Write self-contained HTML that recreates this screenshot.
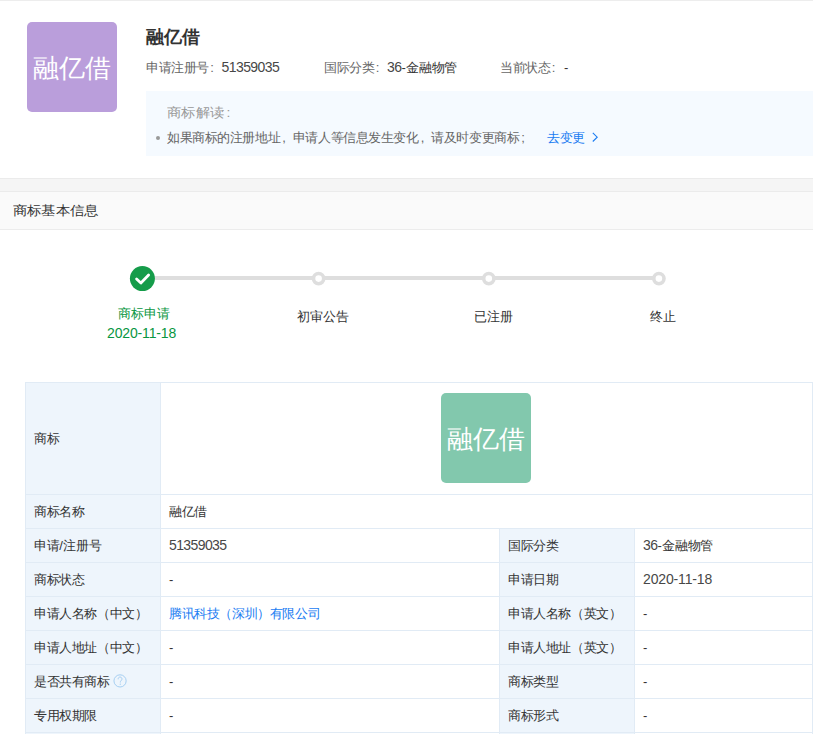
<!DOCTYPE html>
<html><head><meta charset="utf-8">
<style>
*{margin:0;padding:0;box-sizing:border-box}
html,body{width:813px;height:734px;overflow:hidden;background:#fff}
body{position:relative;font-family:"Liberation Sans",sans-serif;font-size:13px;color:#333}
.a{position:absolute;white-space:nowrap;line-height:16px;letter-spacing:-0.4px}
.topline{position:absolute;left:0;top:0;width:813px;height:1px;background:#ededed}
.logo{position:absolute;left:27px;top:22px;width:90px;height:90px;border-radius:5px;background:#ba9edb;color:#fff;font-size:26px;line-height:92px;text-align:center}
.title{font-size:18px;font-weight:bold;color:#333;left:146px;top:26px;line-height:22px;letter-spacing:0}
.lbl{color:#666}
.cm{display:inline-block;width:12.58px;padding-left:2px;letter-spacing:0}
.c{display:inline-block;width:12.6px;padding-left:1.3px}
.n{font-size:14px;letter-spacing:-0.6px;color:#474747}
.d{font-size:14px;letter-spacing:-0.15px}
td .d{color:#474747}
.tip{position:absolute;left:146px;top:91px;width:667px;height:65px;background:#f5faff}
.band{position:absolute;left:0;top:178px;width:813px;height:14px;background:#f5f5f5;border-top:1px solid #ebebeb;border-bottom:1px solid #ebebeb}
.hdr{position:absolute;left:0;top:192px;width:813px;height:38px;background:#fafafa;border-bottom:1px solid #ececec}
.green{color:#089641}
table{position:absolute;left:25px;top:382px;border-collapse:collapse;table-layout:fixed;width:787px}
td{border:1px solid #e1ebf5;height:34px;padding:0 0 0 8px;vertical-align:middle;white-space:nowrap;line-height:16px;letter-spacing:-0.4px}
td.l{background:#eef5fc}
.tm{position:absolute;left:441px;top:393px;width:90px;height:90px;border-radius:5px;background:#82c8ad;color:#fff;font-size:26px;line-height:92px;text-align:center}
.blue{color:#1a7cf2}
.q{display:inline-block;width:13px;height:13px;border:1px solid #a9cdf0;border-radius:50%;color:#a9cdf0;font-size:10px;line-height:11px;text-align:center;vertical-align:-2px;margin-left:4px;letter-spacing:0}
</style></head><body>
<div class="topline"></div>
<div class="logo">融亿借</div>
<div class="a title">融亿借</div>
<div class="a" style="left:146px;top:59px"><span class="lbl">申请注册号<span class="c">:</span></span><span class="n">51359035</span></div>
<div class="a" style="left:324px;top:59px"><span class="lbl">国际分类<span class="c">:</span></span><span class="n">36</span><span style="letter-spacing:0.6px">-</span>金融物管</div>
<div class="a" style="left:500px;top:60px"><span class="lbl">当前状态<span class="c">:</span></span><span style="margin-left:1px">-</span></div>
<div class="tip"></div>
<div class="a" style="left:167px;top:104px;color:#999;font-size:14px;letter-spacing:0.4px;transform:scaleY(0.9);transform-origin:0 10px">商标解读<span class="c" style="width:14px;padding-left:2px">:</span></div>
<div style="position:absolute;left:156px;top:136px;width:4px;height:4px;border-radius:50%;background:#999"></div>
<div class="a" style="left:167px;top:130px;color:#666;letter-spacing:-0.42px">如果商标的注册地址<span class="cm">,</span>申请人等信息发生变化<span class="cm">,</span>请及时变更商标<span class="cm">;</span></div>
<div class="a blue" style="left:547px;top:130px">去变更</div>
<svg style="position:absolute;left:591px;top:132px" width="8" height="11" viewBox="0 0 8 11"><path d="M1.8 0.9 L6.2 5.2 L1.8 9.5" fill="none" stroke="#1a7cf2" stroke-width="1.1"/></svg>

<div class="band"></div>
<div class="hdr"></div>
<div class="a" style="left:13px;top:202px;font-size:14px;line-height:17px;letter-spacing:0.2px;transform:scaleY(0.9);transform-origin:0 10px">商标基本信息</div>

<svg style="position:absolute;left:0;top:250px" width="813" height="60" viewBox="0 250 813 60">
<rect x="142" y="276" width="517" height="4" fill="#dedede"/>
<circle cx="142.4" cy="278.6" r="12.5" fill="#159c4a"/>
<path d="M136.6 279 L140.9 283 L148.6 275" fill="none" stroke="#fff" stroke-width="2.8" stroke-linecap="round" stroke-linejoin="round"/>
<circle cx="318.6" cy="278.6" r="5.1" fill="#fff" stroke="#dedede" stroke-width="3.6"/>
<circle cx="488.8" cy="278.6" r="5.1" fill="#fff" stroke="#dedede" stroke-width="3.6"/>
<circle cx="658.9" cy="278.6" r="5.1" fill="#fff" stroke="#dedede" stroke-width="3.6"/>
</svg>
<div class="a green" style="left:118px;top:306px;letter-spacing:0">商标申请</div>
<div class="a green d" style="left:107px;top:325px">2020-11-18</div>
<div class="a" style="left:297px;top:309px;letter-spacing:0">初审公告</div>
<div class="a" style="left:474px;top:309px;letter-spacing:0">已注册</div>
<div class="a" style="left:650px;top:309px;letter-spacing:0">终止</div>

<table>
<colgroup><col style="width:135px"><col style="width:339px"><col style="width:135px"><col style="width:178px"></colgroup>
<tr><td class="l" style="height:112px">商标</td><td colspan="3"></td></tr>
<tr><td class="l">商标名称</td><td colspan="3">融亿借</td></tr>
<tr><td class="l">申请<span style="letter-spacing:0.5px">/</span>注册号</td><td><span class="n">51359035</span></td><td class="l">国际分类</td><td><span class="n">36</span><span style="letter-spacing:0.6px">-</span>金融物管</td></tr>
<tr><td class="l">商标状态</td><td>-</td><td class="l">申请日期</td><td><span class="d">2020-11-18</span></td></tr>
<tr><td class="l">申请人名称（中文）</td><td class="blue">腾讯科技（深圳）有限公司</td><td class="l">申请人名称（英文）</td><td>-</td></tr>
<tr><td class="l">申请人地址（中文）</td><td>-</td><td class="l">申请人地址（英文）</td><td>-</td></tr>
<tr><td class="l">是否共有商标</td><td>-</td><td class="l">商标类型</td><td>-</td></tr>
<tr><td class="l">专用权期限</td><td>-</td><td class="l">商标形式</td><td>-</td></tr>
<tr><td class="l"></td><td></td><td class="l"></td><td></td></tr>
</table>
<div class="tm">融亿借</div>
<svg style="position:absolute;left:110px;top:671px" width="20" height="20" viewBox="0 0 20 20"><circle cx="10.05" cy="9.9" r="6.1" fill="none" stroke="#a6cff2" stroke-width="1"/><path d="M8.2 8.3 A1.9 1.9 0 1 1 11.8 8.7 C11.4 9.7 10.3 9.9 10.3 11.5" fill="none" stroke="#a6cff2" stroke-width="1"/><circle cx="10.3" cy="13.2" r="0.65" fill="#a6cff2"/></svg>
</body></html>
